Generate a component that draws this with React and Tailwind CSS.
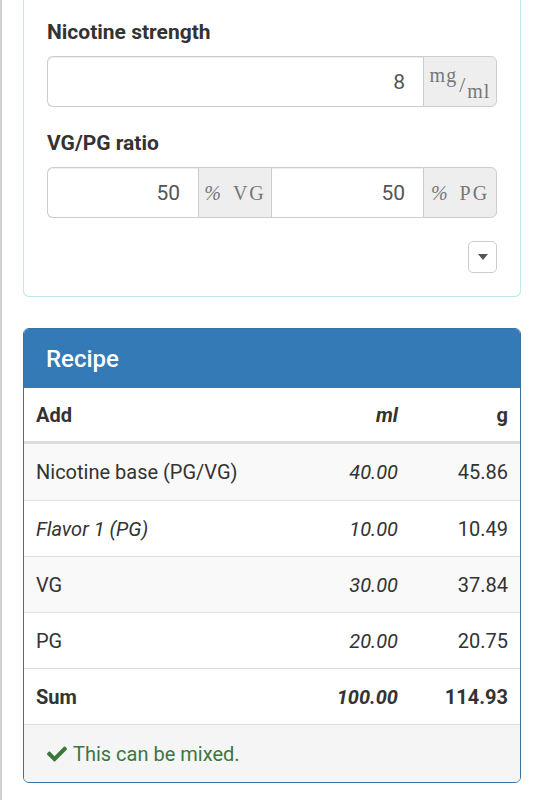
import React from "react";
import { FaCheck } from "react-icons/fa";

const serifFont = "font-['Liberation_Serif',serif]";

function Addon({ children, className = "" }) {
  return (
    <div
      className={`flex h-full w-[74px] shrink-0 items-center justify-center border border-[#ccc] bg-[#eee] text-[#777] text-[20px] ${serifFont} ${className}`}
    >
      {children}
    </div>
  );
}

function Input({ value, className = "" }) {
  return (
    <div
      className={`flex h-full min-w-0 flex-1 items-center justify-end border border-[#ccc] bg-white pr-[18px] text-[21px] text-[#555] shadow-[inset_0_1px_1px_rgba(0,0,0,0.075)] ${className}`}
    >
      {value}
    </div>
  );
}

const rows = [
  { name: "Nicotine base (PG/VG)", ml: "40.00", g: "45.86", striped: true },
  { name: "Flavor 1 (PG)", ml: "10.00", g: "10.49", italic: true },
  { name: "VG", ml: "30.00", g: "37.84", striped: true },
  { name: "PG", ml: "20.00", g: "20.75" },
];

export default function App() {
  return (
    <div className="min-h-[800px] bg-white border-l-2 border-[#d0d0d0] pl-[21px] pr-[22px] font-['Roboto',sans-serif] text-[21px] leading-[30px] text-[#333]">
      {/* Settings panel (top cut off) */}
      <div className="rounded-b-[6px] border-x border-b border-[#bce8f1] px-[23px] pt-[17px] pb-[23px]">
        <div className="mb-[9px] font-bold">Nicotine strength</div>
        <div className="flex h-[51px]">
          <Input value="8" className="rounded-l-[6px] border-r-0" />
          <Addon className="rounded-r-[6px] text-[16px] leading-none">
            <span className="relative -top-[7px] tracking-[1px]">mg</span>
            <span className="relative top-[3px] mx-[2px] text-[22px]">/</span>
            <span className="relative top-[9px] tracking-[1px]">ml</span>
          </Addon>
        </div>

        <div className="mt-[21px] mb-[9px] font-bold">VG/PG ratio</div>
        <div className="flex h-[51px]">
          <div className="flex h-full flex-1">
            <Input value="50" className="rounded-l-[6px] border-r-0" />
            <Addon className="gap-[12px]">
              <span className="italic">%</span>
              <span className="tracking-[2px]">VG</span>
            </Addon>
          </div>
          <div className="flex h-full flex-1">
            <Input value="50" className="border-x-0" />
            <Addon className="rounded-r-[6px] gap-[12px]">
              <span className="italic">%</span>
              <span className="tracking-[2px]">PG</span>
            </Addon>
          </div>
        </div>

        <div className="mt-[23px] flex justify-end">
          <button className="flex h-[32px] w-[29px] items-center justify-center rounded-[5px] border border-[#ccc] bg-white">
            <svg width="10" height="6" viewBox="0 0 10 6">
              <path d="M0 0 L10 0 L5 6 Z" fill="#555" />
            </svg>
          </button>
        </div>
      </div>

      {/* Recipe panel */}
      <div className="mt-[31px] overflow-hidden rounded-[6px] border border-[#3a73a0] text-[20px]">
        <div className="flex h-[59px] items-center bg-[#337ab7] px-[22px] text-[24px] font-medium text-white">
          Recipe
        </div>

        <div className="grid h-[56px] grid-cols-[1fr_110px_110px] items-center border-b-[3px] border-[#ddd] font-bold">
          <div className="px-[12px]">Add</div>
          <div className="px-[12px] text-right italic">ml</div>
          <div className="px-[12px] text-right">g</div>
        </div>

        {rows.map((r, i) => (
          <div
            key={r.name}
            className={`grid h-[56px] grid-cols-[1fr_110px_110px] items-center ${
              i > 0 ? "border-t border-[#ddd]" : ""
            } ${r.striped ? "bg-[#f9f9f9]" : "bg-white"}`}
          >
            <div className={`px-[12px] ${r.italic ? "italic" : ""}`}>{r.name}</div>
            <div className="px-[12px] text-right italic">{r.ml}</div>
            <div className="px-[12px] text-right">{r.g}</div>
          </div>
        ))}

        <div className="grid h-[56px] grid-cols-[1fr_110px_110px] items-center border-t border-[#ddd] bg-white font-bold">
          <div className="px-[12px]">Sum</div>
          <div className="px-[12px] text-right italic">100.00</div>
          <div className="px-[12px] text-right">114.93</div>
        </div>

        <div className="flex h-[58px] items-center gap-[6px] border-t border-[#ddd] bg-[#f5f5f5] px-[23px] text-[#3c763d]">
          <FaCheck className="h-[20px] w-[20px]" />
          <span>This can be mixed.</span>
        </div>
      </div>
    </div>
  );
}
